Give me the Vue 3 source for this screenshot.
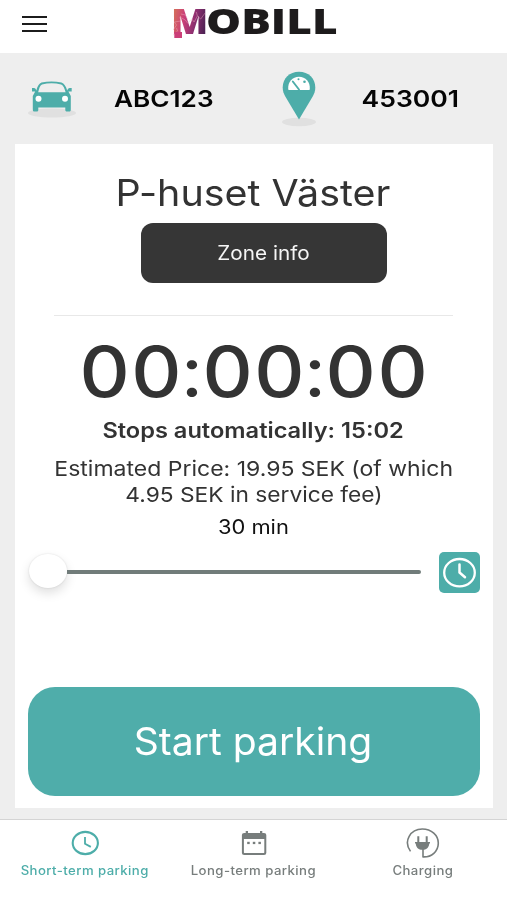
<script setup>
import { ref } from 'vue'

const plate = ref('ABC123')
const zone = ref('453001')
const active = ref('short')
const tabs = [
  { id: 'short', label: 'Short-term parking' },
  { id: 'long', label: 'Long-term parking' },
  { id: 'charge', label: 'Charging' },
]
</script>

<template>
  <div class="screen">
    <header class="topbar">
      <button class="menu" aria-label="Menu"><i></i><i></i><i></i></button>
      <div class="logo">
        <span class="logo-m">M<svg class="crack" viewBox="0 0 34 32"><path d="M2 24L5 19L3 16L9 15L8 11L13 14L15 17L19 13L21 16L24 10L27 13L31 7M2 29L6 25L5 22M9 8L13 9L15 13M24 10L23 6" /></svg></span><span class="logo-rest">OBILL</span>
      </div>
    </header>

    <section class="summary">
      <svg class="car" viewBox="0 0 50 38">
        <ellipse cx="25" cy="33" rx="24" ry="4.500" fill="#e0e0e0" />
        <path fill="#4dada9" fill-rule="evenodd" d="M9.300 10.500C10.600 6 12.300 3.300 14.500 2.600Q24.500 .4 34.500 2.600C37 3.300 39 6.500 40.200 10.500Q40.700 8.300 42.500 8.100H44.700V11.500H41.400L43.800 16V29.500Q43.800 31.400 42.800 31.400H39.300Q38.300 31.400 38.300 30V27.600H11.300V30Q11.300 31.400 10.300 31.400H6.800Q5.800 31.400 5.800 29.500V16L8.200 11.500H5V8.100H7.200Q8.900 8.300 9.300 10.500ZM11.200 12.200H38.600C37.700 8.500 36.300 5.300 34.200 4.400Q24.500 2.300 15 4.400C13 5.300 12 8.500 11.200 12.200Z" />
        <circle cx="11.500" cy="18.800" r="3" fill="#fff" />
        <circle cx="38" cy="18.800" r="3" fill="#fff" />
      </svg>
      <span class="value plate">{{ plate }}</span>
      <svg class="pin" viewBox="0 0 36 56">
        <ellipse cx="18" cy="51" rx="17" ry="4.200" fill="#e0e0e0" />
        <path fill="#4dada9" d="M18 .8C27.500 .8 34.300 7.600 34.300 16.500C34.300 20 33.300 22.500 31.700 25.500L18 48.500L4.300 25.500C2.700 22.500 1.700 20 1.700 16.500C1.700 7.600 8.500 .8 18 .8Z" />
        <path fill="#fff" d="M7.200 18.200C6.700 10.800 11.500 5.800 18 5.800S29.300 10.800 28.800 18.200Q28.700 19 28 19H8Q7.300 19 7.200 18.200Z" />
        <path d="M11.800 10.500L18 18.500" stroke="#4dada9" stroke-width="1.900" stroke-linecap="round" />
        <circle cx="17.500" cy="8.200" r="1" fill="#4dada9" /><circle cx="23.500" cy="10.700" r="1.300" fill="#4dada9" />
      </svg>
      <span class="value zone">{{ zone }}</span>
    </section>

    <main class="card">
      <h1><span>P-huset Väster</span></h1>
      <button class="info"><span>Zone info</span></button>
      <hr>
      <div class="timer"><span>00<b>:</b>00<b>:</b>00</span></div>
      <div class="stops"><span>Stops automatically: 15:02</span></div>
      <div class="price">
        <span class="price-a">Estimated Price: 19.95 SEK (of which</span>
        <span class="price-b">4.95 SEK in service fee)</span>
      </div>
      <div class="duration"><span>30 min</span></div>
      <div class="slider-row">
        <div class="slider"><div class="thumb"></div><div class="track"></div></div>
        <button class="clock" aria-label="Pick time">
          <svg viewBox="0 0 41 41" fill="none" stroke="#fff" stroke-linecap="round" stroke-linejoin="round">
            <ellipse cx="20.500" cy="20.700" rx="15.300" ry="13.700" stroke-width="2.300" />
            <path d="M20.500 12.500V20.500L26 25.300" stroke-width="2.500" />
          </svg>
        </button>
      </div>
      <button class="start"><span>Start parking</span></button>
    </main>

    <nav class="tabs">
      <button v-for="t in tabs" :key="t.id" class="tab" :class="{ on: active === t.id }" @click="active = t.id">
        <svg v-if="t.id === 'short'" viewBox="0 0 34 32" fill="none" stroke="currentColor">
          <ellipse cx="17.300" cy="16" rx="12.600" ry="11.100" stroke-width="2.100" />
          <path d="M17 10V16.700L22.800 19.900" stroke-width="1.800" />
        </svg>
        <svg v-else-if="t.id === 'long'" viewBox="0 0 34 32" fill="currentColor">
          <path fill-rule="evenodd" d="M8.700 4H11V6H23V4H25.300V6H27Q29.300 6 29.300 8V26Q29.300 28 27 28H7.200Q4.900 28 4.900 26V8Q4.900 6 7.200 6H8.700ZM6.900 12V25.200Q6.900 26.100 7.900 26.100H26.300Q27.300 26.100 27.300 25.200V12Z" />
          <rect x="10.200" y="14.800" width="2.500" height="2.300" /><rect x="15.800" y="14.800" width="2.500" height="2.300" /><rect x="21.400" y="14.800" width="2.500" height="2.300" />
        </svg>
        <svg v-else viewBox="0.500 0 34 32" fill="none" stroke="currentColor">
          <path d="M5 24.400C-2.500 14 5 2 16.800 2C26 2 32.800 8.300 32.800 16C32.800 24.500 26 30.300 17.500 29.900V21" stroke-width="1.600" stroke-linejoin="round" />
          <path d="M12.800 9.200V16M21.200 9.200V16" stroke-width="2" />
          <path fill="currentColor" stroke="none" d="M9.500 15H24.500V16.500H23.700C23.700 19.700 21.500 22.400 18.600 22.700H15.400C12.500 22.400 10.300 19.700 10.300 16.500H9.500Z" />
        </svg>
        <span>{{ t.label }}</span>
      </button>
    </nav>
  </div>
</template>

<style>
body { margin: 0; background: #fff; }
</style>

<style scoped>
.screen { width: 507px; height: 900px; display: flex; flex-direction: column; background: #eee; color: #333; font-family: Inter, "Liberation Sans", sans-serif; box-sizing: border-box; }
button { border: 0; padding: 0; margin: 0; background: none; font: inherit; color: inherit; }
span { display: inline-block; white-space: nowrap; }
.topbar { height: 53px; flex: none; background: #fff; display: flex; align-items: flex-start; }
.menu { width: 25px; margin: 15.500px 0 0 22px; display: flex; flex-direction: column; gap: 4.500px; }
.menu i { display: block; height: 2.500px; background: #1c1c1c; }
.logo { display: flex; margin: 1px 0 0 123.500px; font: 800 35px/40px "Open Sans", sans-serif; color: #1d1b1c; }
.logo-m { position: relative; width: 35px; transform: scaleX(1.1); transform-origin: 0 50%; color: transparent; background: linear-gradient(100deg, #d9834f 0, #cb3f78 35%, #8d2f70 60%, #43204f 90%); background-clip: text; -webkit-background-clip: text; }
.logo-m::after { content: ""; position: absolute; left: 2.500px; top: 31px; width: 7.500px; height: 6px; background: #cb3f78; }
.crack { position: absolute; left: 0; top: 5px; width: 34px; height: 32px; fill: none; stroke: #efaabd; stroke-width: .7; opacity: .6; }
.logo-rest { transform: scaleX(1.26); transform-origin: 0 50%; }
.summary { height: 91px; flex: none; display: grid; grid-template-columns: 103px 121px 149px 74px; align-items: center; justify-items: center; }
.car { width: 50px; height: 38px; }
.pin { width: 36px; height: 56px; }
.value { font-weight: 600; font-size: 23px; line-height: 30px; color: #050505; }
.plate { transform: scaleX(1.138); }
.zone { transform: scaleX(1.153); }
.card { width: 478.500px; height: 664px; margin-left: 14.500px; flex: none; background: #fff; display: flex; flex-direction: column; align-items: center; box-sizing: border-box; padding-top: 22.500px; }
h1 { margin: 0 2px 0 0; font-weight: 400; font-size: 37px; line-height: 52px; }
h1 span { transform: scaleX(1.065); }
.info { width: 246.500px; height: 60px; margin: 4.500px 0 0 20px; border-radius: 12px; background: #363636; color: #f5f5f5; font-size: 19.500px; }
.info span { transform: scaleX(1.062); }
hr { width: 399px; height: 1px; border: 0; background: #e8e8e8; margin: 32px 0 0; }
.timer { margin-top: 16px; font-weight: 500; font-size: 70px; line-height: 80px; font-feature-settings: "calt" 0; }
.timer span { letter-spacing: 1.500px; margin-right: -1.500px; transform: scaleX(1.112); }
.timer b { margin: 0 -2.200px; font-weight: 400; }
.stops { margin: 5.500px 2px 0 0; font-weight: 600; font-size: 21px; line-height: 26px; }
.stops span { transform: scaleX(1.124); }
.price { margin-top: 12px; display: flex; flex-direction: column; align-items: center; font-size: 20.500px; line-height: 26px; }
.price-a { transform: scaleX(1.122); }
.price-b { transform: scaleX(1.109); }
.duration { margin-top: 6px; font-size: 20px; line-height: 26px; color: #111; }
.duration span { transform: scaleX(1.095); }
.slider-row { width: 451px; height: 41px; margin: 12px 0 0 2px; display: flex; align-items: center; justify-content: space-between; }
.slider { width: 392px; display: flex; align-items: center; }
.thumb { flex: none; width: 38px; height: 34px; margin-top: -3px; border-radius: 50%; background: #fff; box-shadow: 0 5px 11px rgba(0,0,0,.13), 0 0 2px rgba(0,0,0,.12); }
.track { flex: 1; height: 4.500px; border-radius: 0 3px 3px 0; background: #717c7a; }
.clock { width: 41px; height: 41px; border-radius: 5px; background: #4dada9; }
.clock svg { display: block; width: 41px; height: 41px; }
.start { width: 452px; height: 108.500px; margin-top: 94.500px; border-radius: 27px; background: #4fadaa; color: #fff; font-size: 38px; }
.start span { margin-right: 2px; transform: scaleX(1.028); }
.tabs { height: 81px; margin-top: 11px; box-sizing: border-box; flex: none; display: grid; grid-template-columns: repeat(3, 1fr); background: #fff; border-top: 1px solid #d4d4d4; }
.tab { display: flex; flex-direction: column; align-items: center; justify-content: flex-start; padding-top: 7px; color: #777d7c; }
.tab.on { color: #4dada9; }
.tab svg { width: 34px; height: 32px; }
.tab span { margin-top: 4px; font-weight: 500; font-size: 12.500px; line-height: 16px; letter-spacing: .4px; transform: scaleX(1.055); }
</style>
